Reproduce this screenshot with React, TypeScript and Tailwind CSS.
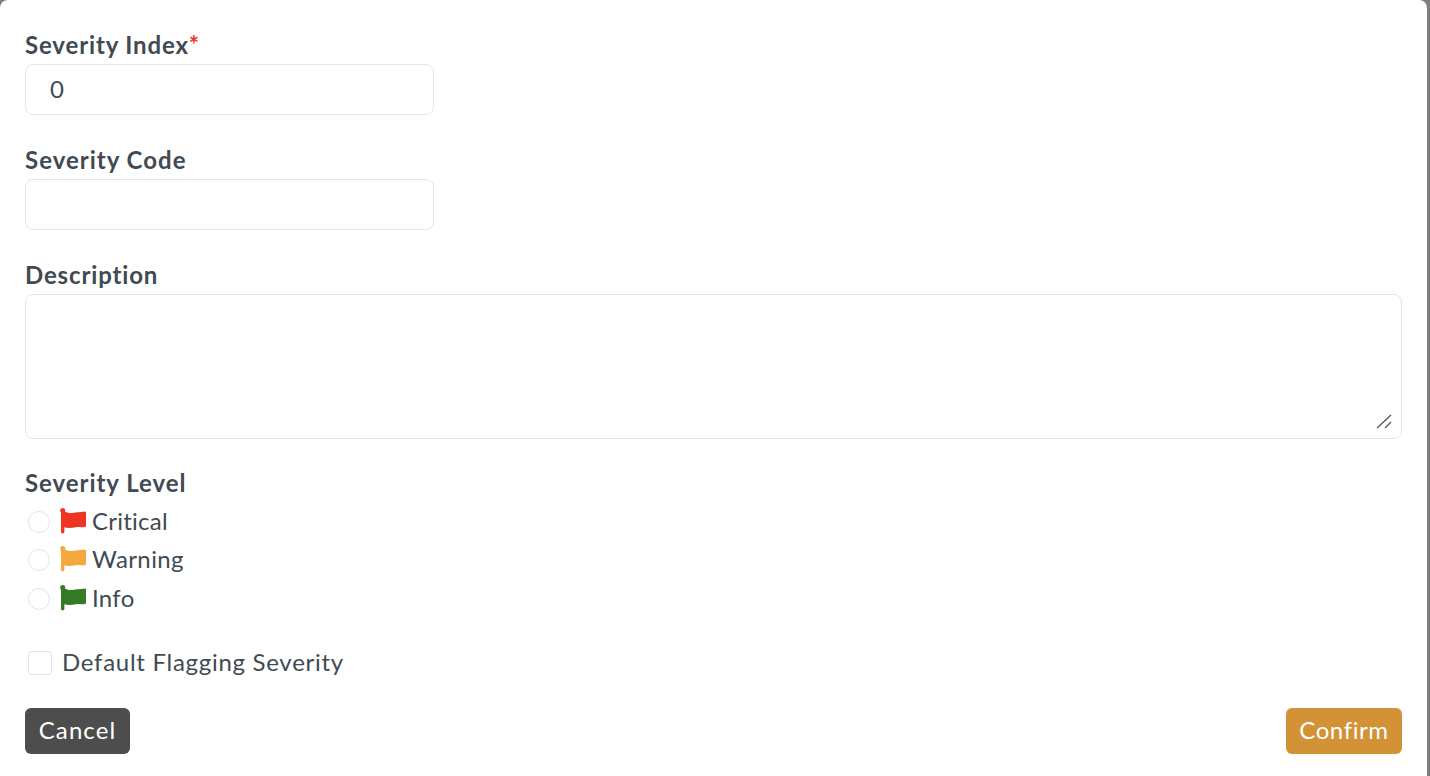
import React from "react";

function Flag({ color }: { color: string }) {
  return (
    <svg width="28" height="28" viewBox="0 0 28 28" className="shrink-0" aria-hidden="true">
      <rect x="1" y="2.5" width="3.4" height="23" rx="1.7" fill={color} />
      <circle cx="2.7" cy="2.6" r="2.5" fill={color} />
      <path
        d="M3.5 2.4 C6.5 4.6 9.5 5.4 12.5 5 C16 4.4 20 4.6 24.8 3.6 Q26 3.4 26 4.6 L26 18.4 C22 19.8 19 18.8 16 19.2 C11.5 20 7.5 20.4 3.5 19 Z"
        fill={color}
      />
    </svg>
  );
}

function RadioRow({ color, label, tracking }: { color: string; label: string; tracking: string }) {
  return (
    <label className="flex h-[38.5px] items-center">
      <input
        type="radio"
        name="severity-level"
        className="ml-[3px] mr-[10px] h-[22px] w-[22px] shrink-0 appearance-none rounded-full border border-[#e4e4e4] bg-white"
      />
      <Flag color={color} />
      <span className={`ml-[4px] pb-[2px] ${tracking}`}>{label}</span>
    </label>
  );
}

export default function App() {
  return (
    <div className="flex h-[776px] w-[1430px] overflow-hidden bg-[#7f7f7f] font-['Lato','Liberation_Sans',sans-serif] text-[24px] text-[#414a52]">
      <form className="flex w-[1427px] flex-col rounded-t-[8px] bg-white px-[25px] pt-[33px]">
        <label className="block h-[24px] font-bold leading-[24px] tracking-[0.85px]">
          Severity Index<span className="text-[#ee3524]">*</span>
        </label>
        <input
          defaultValue="0"
          className="mt-[7px] h-[51px] w-[409px] rounded-[8px] border border-[#e6e6e6] px-[24px] pb-[2px] text-[24px] outline-none"
        />
        <label className="mt-[33px] block h-[24px] font-bold leading-[24px] tracking-[1px]">Severity Code</label>
        <input className="mt-[7px] h-[51px] w-[409px] rounded-[8px] border border-[#e6e6e6] px-[24px] outline-none" />
        <label className="mt-[33px] block h-[24px] font-bold leading-[24px] tracking-[0.85px]">Description</label>
        <div className="relative mt-[7px] h-[145px]">
          <textarea className="block h-full w-full resize-none rounded-[8px] border border-[#e6e6e6] px-[24px] outline-none" />
          <svg width="16" height="15" viewBox="0 0 16 15" className="absolute bottom-[10px] right-[10px]" aria-hidden="true">
            <path d="M1 14 L15 1 M9 14 L15 8" stroke="#555" strokeWidth="1.3" fill="none" />
          </svg>
        </div>
        <label className="mt-[32px] block h-[24px] font-bold leading-[24px] tracking-[0.95px]">Severity Level</label>
        <div className="mt-[7.7px] flex flex-col">
          <RadioRow color="#ee3524" label="Critical" tracking="tracking-[0.25px]" />
          <RadioRow color="#f4a93c" label="Warning" tracking="tracking-[0.4px]" />
          <RadioRow color="#357a25" label="Info" tracking="tracking-[0.3px]" />
        </div>
        <label className="mt-[32.6px] flex h-[24px] items-center">
          <input
            type="checkbox"
            className="ml-[3px] mr-[10px] h-[24px] w-[24px] shrink-0 appearance-none rounded-[3px] border border-[#e4e4e4] bg-white"
          />
          <span className="pb-[1px] tracking-[0.72px]">Default Flagging Severity</span>
        </label>
        <div className="mt-[33px] flex items-center justify-between">
          <button type="button" className="h-[46px] w-[105px] rounded-[6px] bg-[#4d4d4d] pb-[1px] text-center tracking-[1.1px] text-white">
            Cancel
          </button>
          <button type="button" className="h-[46px] w-[116px] rounded-[6px] bg-[#d39236] pb-[1px] text-center tracking-[0.6px] text-white">
            Confirm
          </button>
        </div>
      </form>
    </div>
  );
}
